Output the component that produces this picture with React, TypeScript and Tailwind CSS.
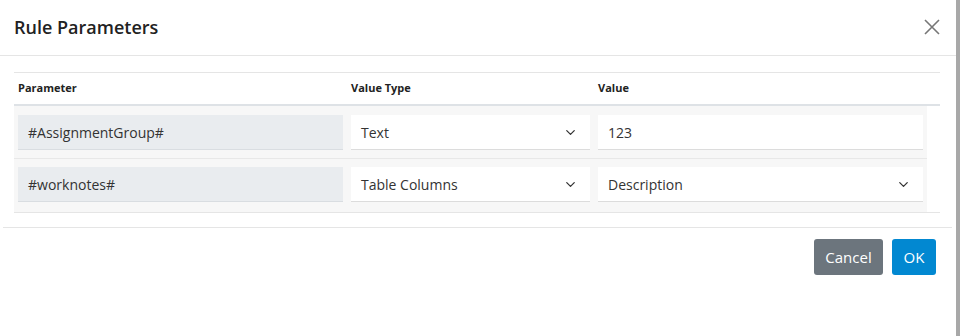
import { ChevronDown } from 'lucide-react'

const font = { fontFamily: '"Open Sans", "Noto Sans", sans-serif' }

function Chevron() {
  return <ChevronDown className="h-[15px] w-[15px] text-[#333]" strokeWidth={2} />
}

function ParamCell({ text }: { text: string }) {
  return (
    <div className="flex h-[35px] w-[325px] items-center border-b border-[#d9dde1] bg-[#e9ecef] px-[10px] text-[14px] text-[#333]">
      {text}
    </div>
  )
}

function SelectCell({ text, width }: { text: string; width: string }) {
  return (
    <div className={`flex h-[35px] ${width} items-center justify-between border-b border-[#dcdcdc] bg-white pl-[10px] pr-[12px] text-[14px] text-[#333]`}>
      <span>{text}</span>
      <Chevron />
    </div>
  )
}

export default function App() {
  return (
    <div className="flex h-[336px] w-[960px] bg-white" style={font}>
      <div className="flex flex-1 flex-col">
        {/* Header */}
        <div className="flex h-[56px] items-center justify-between border-b border-[#e5e5e5] pl-[14px] pr-[16px]">
          <h2 className="text-[18px] font-semibold text-[#222] -mt-[1px]">Rule Parameters</h2>
          <svg width="16" height="16" viewBox="0 0 16 16" className="-mt-[1px]">
            <path d="M1 1 L15 15 M15 1 L1 15" stroke="#777" strokeWidth="1.6" fill="none" />
          </svg>
        </div>

        {/* Body */}
        <div className="pl-[14px] pt-[16px]">
          <div className="w-[926px] border-b border-[#e5e5e5]">
            <div className="flex h-[34px] items-center border-t border-b-2 border-t-[#e5e5e5] border-b-[#dee2e6] text-[11px] font-bold text-[#222]">
              <div className="w-[337px] pl-[4px]">Parameter</div>
              <div className="w-[247px]">Value Type</div>
              <div>Value</div>
            </div>
            <div className="w-[913px] bg-[#f7f7f7]">
              <div className="flex gap-[8px] border-b border-[#e8e8e8] px-[4px] pt-[9px] pb-[8px]">
                <ParamCell text="#AssignmentGroup#" />
                <SelectCell text="Text" width="w-[239px]" />
                <div className="flex h-[35px] w-[325px] items-center border-b border-[#dcdcdc] bg-white px-[10px] text-[14px] text-[#333]">
                  123
                </div>
              </div>
              <div className="flex gap-[8px] px-[4px] pt-[8px] pb-[10px]">
                <ParamCell text="#worknotes#" />
                <SelectCell text="Table Columns" width="w-[239px]" />
                <SelectCell text="Description" width="w-[325px]" />
              </div>
            </div>
          </div>
        </div>

        {/* Footer */}
        <div className="mt-[14px] ml-[3px] mr-[4px] border-t border-[#e5e5e5]" />
        <div className="flex justify-end gap-[9px] pr-[20px] pt-[11px]">
          <button className="h-[36px] w-[69px] rounded-[3px] bg-[#6c757d] text-[15px] text-white">Cancel</button>
          <button className="h-[36px] w-[44px] rounded-[3px] bg-[#0288d1] text-[15px] text-white">OK</button>
        </div>
      </div>
      <div className="w-[4px] bg-[#a8a8a8]" />
    </div>
  )
}
